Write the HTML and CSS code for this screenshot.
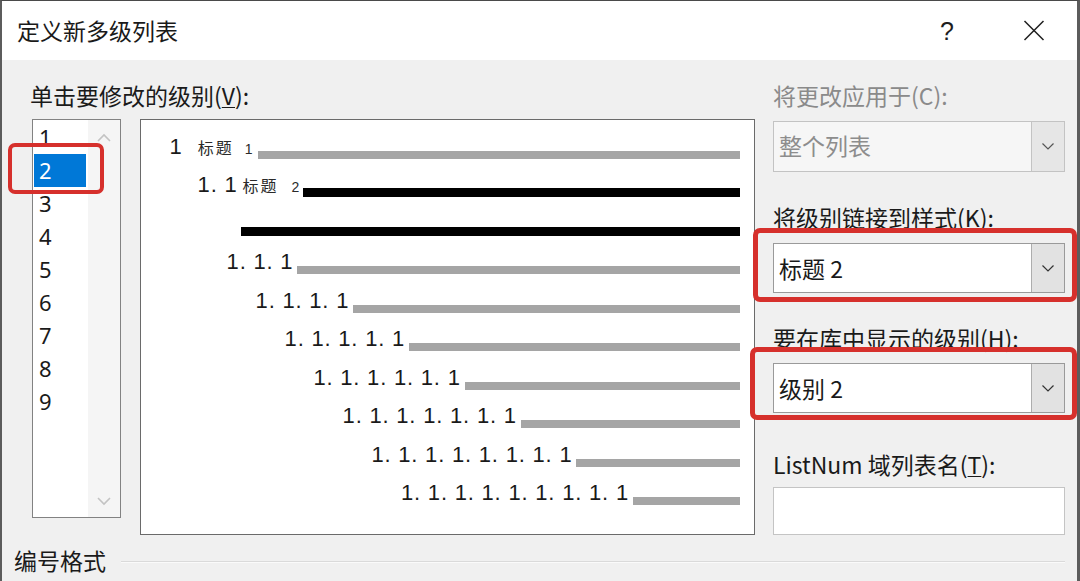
FILE: index.html
```html
<!DOCTYPE html>
<html lang="zh-CN">
<head>
<meta charset="utf-8">
<title>定义新多级列表</title>
<link rel="stylesheet" href="styles.css">
</head>
<body>
<div class="page">
  <div class="dialog">
    <div class="titlebar">
      <span class="title">定义新多级列表</span>
      <div class="title-btns">
        <span class="help">?</span>
        <svg class="close" width="22" height="21" viewBox="0 0 22 21"><path d="M1.5 1L20.5 20M20.5 1L1.5 20" stroke="#1e1e1e" stroke-width="1.5" fill="none"/></svg>
      </div>
    </div>
    <div class="content">
      <div class="main">
        <div class="left">
          <div class="label">单击要修改的级别(<u>V</u>):</div>
          <div class="left-row">
            <div class="levels">
              <div class="items">
                <div class="item">1</div>
                <div class="item sel">2</div>
                <div class="item">3</div>
                <div class="item">4</div>
                <div class="item">5</div>
                <div class="item">6</div>
                <div class="item">7</div>
                <div class="item">8</div>
                <div class="item">9</div>
              </div>
              <div class="scroll">
                <svg width="14" height="9" viewBox="0 0 14 9"><path d="M1 8L7 2L13 8" stroke="#c3c3c3" stroke-width="1.6" fill="none"/></svg>
                <svg width="14" height="9" viewBox="0 0 14 9"><path d="M1 1L7 7L13 1" stroke="#c3c3c3" stroke-width="1.6" fill="none"/></svg>
              </div>
            </div>
            <div class="preview">
              <div class="prow l1">
                <div class="txt"><span class="num">1</span><span class="sty sty1">标题</span><span class="sn sn1">1</span></div>
                <span class="bar gray bar1"></span>
              </div>
              <div class="prow l2">
                <div class="txt"><span class="num">1. 1</span><span class="sty sty2">标题</span><span class="sn sn2">2</span></div>
                <span class="bar black bar2"></span>
              </div>
              <div class="prow lx">
                <span class="bar black"></span>
              </div>
              <div class="prow l3"><div class="txt"><span class="num">1. 1. 1</span></div><span class="bar gray"></span></div>
              <div class="prow l4"><div class="txt"><span class="num">1. 1. 1. 1</span></div><span class="bar gray"></span></div>
              <div class="prow l5"><div class="txt"><span class="num">1. 1. 1. 1. 1</span></div><span class="bar gray"></span></div>
              <div class="prow l6"><div class="txt"><span class="num">1. 1. 1. 1. 1. 1</span></div><span class="bar gray"></span></div>
              <div class="prow l7"><div class="txt"><span class="num">1. 1. 1. 1. 1. 1. 1</span></div><span class="bar gray"></span></div>
              <div class="prow l8"><div class="txt"><span class="num">1. 1. 1. 1. 1. 1. 1. 1</span></div><span class="bar gray"></span></div>
              <div class="prow l9"><div class="txt"><span class="num">1. 1. 1. 1. 1. 1. 1. 1. 1</span></div><span class="bar gray"></span></div>
            </div>
          </div>
        </div>
        <div class="right">
          <div class="label disabled">将更改应用于(C):</div>
          <div class="combo combo-disabled c1">
            <span class="combo-text">整个列表</span>
            <span class="combo-btn"><svg width="12" height="7" viewBox="0 0 12 7"><path d="M0.5 0.5L6 6L11.5 0.5" stroke="#555" stroke-width="1.2" fill="none"/></svg></span>
          </div>
          <div class="label l-k">将级别链接到样式(K):</div>
          <div class="combo c2">
            <span class="combo-text">标题 2</span>
            <span class="combo-btn"><svg width="12" height="7" viewBox="0 0 12 7"><path d="M0.5 0.5L6 6L11.5 0.5" stroke="#333" stroke-width="1.2" fill="none"/></svg></span>
          </div>
          <div class="label l-h">要在库中显示的级别(H):</div>
          <div class="combo c3">
            <span class="combo-text">级别 2</span>
            <span class="combo-btn"><svg width="12" height="7" viewBox="0 0 12 7"><path d="M0.5 0.5L6 6L11.5 0.5" stroke="#333" stroke-width="1.2" fill="none"/></svg></span>
          </div>
          <div class="label l-t">ListNum 域列表名(<u>T</u>):</div>
          <div class="field"></div>
        </div>
      </div>
      <div class="group-head">
        <span class="group-title">编号格式</span>
        <div class="sep"></div>
      </div>
    </div>
  </div>
  <div class="mark mark-level"></div>
  <div class="mark mark-style"></div>
  <div class="mark mark-gallery"></div>
</div>
</body>
</html>
```
FILE: styles.css
```css
html, body {
  margin: 0;
  padding: 0;
  width: 1080px;
  height: 581px;
  overflow: hidden;
  background: #f0f0f0;
}

.page {
  position: relative;
  width: 1080px;
  height: 581px;
  font-family: "Noto Sans CJK SC", "Noto Sans", sans-serif;
  color: #1a1a1a;
}

.dialog {
  box-sizing: border-box;
  width: 1080px;
  height: 581px;
  border-top: 1px solid #4a4a4a;
  border-left: 2px solid #5c5c5c;
  border-right: 3px solid #5c5c5c;
  background: #f0f0f0;
  display: flex;
  flex-direction: column;
}

.titlebar {
  height: 59px;
  background: #ffffff;
  display: flex;
  align-items: center;
  padding-left: 15px;
  padding-right: 32px;
}

.title {
  font-size: 23px;
  line-height: 59px;
  color: #1a1a1a;
}

.title-btns {
  margin-left: auto;
  display: flex;
  align-items: center;
}

.help {
  font-family: "Liberation Sans", sans-serif;
  font-size: 25px;
  line-height: 30px;
  color: #1e1e1e;
  margin-right: 69px;
}

.close {
  display: block;
}

.content {
  flex: 1;
  padding-top: 20px;
  display: flex;
  flex-direction: column;
}

.main {
  display: flex;
}

.left {
  margin-left: 28px;
  width: 725px;
}

.label {
  font-size: 23px;
  line-height: 30px;
  height: 30px;
  white-space: nowrap;
  color: #1a1a1a;
}

.label u {
  text-decoration-thickness: 1px;
  text-underline-offset: 2px;
}

.label.disabled {
  color: #8a8a8a;
}

.left-row {
  margin-top: 9px;
  display: flex;
  align-items: flex-start;
}

.levels {
  box-sizing: border-box;
  margin-left: 2px;
  width: 89px;
  height: 399px;
  border: 1px solid #828282;
  background: #ffffff;
  display: flex;
}

.items {
  flex: 1;
  padding-top: 1px;
}

.item {
  height: 33px;
  line-height: 33px;
  margin-left: 1px;
  margin-right: 2px;
  padding-left: 5px;
  font-family: "Noto Sans", sans-serif;
  font-size: 22px;
  color: #1a1a1a;
}

.item.sel {
  background: #0078d7;
  color: #ffffff;
}

.scroll {
  width: 32px;
  background: #f5f5f5;
  display: flex;
  flex-direction: column;
  justify-content: space-between;
  align-items: center;
  padding: 13px 0 11px;
}

.scroll svg {
  display: block;
}

.preview {
  box-sizing: border-box;
  margin-left: 19px;
  width: 615px;
  height: 416px;
  border: 1px solid #6a6a6a;
  background: #ffffff;
  display: flex;
  flex-direction: column;
}

.prow {
  height: 38.5px;
  display: flex;
  align-items: flex-end;
  padding-right: 14px;
  flex-shrink: 0;
}

.txt {
  display: flex;
  align-items: baseline;
}

.num {
  font-family: "Liberation Sans", sans-serif;
  font-size: 22px;
  line-height: 24px;
  letter-spacing: 0.8px;
  white-space: pre;
  color: #1a1a1a;
}

.sty {
  font-size: 16px;
  line-height: 16px;
  letter-spacing: 2px;
  color: #2a2a2a;
}

.sn {
  font-family: "Liberation Sans", sans-serif;
  font-size: 14px;
  line-height: 16px;
  color: #2a2a2a;
}

.sty1 { margin-left: 15px; }
.sn1 { margin-left: 11px; }
.sty2 { margin-left: 5px; }
.sn2 { margin-left: 13px; }

.bar {
  flex: 1;
  margin-left: 4px;
}

.bar.gray {
  height: 8px;
  background: #a5a5a5;
}

.bar.black {
  height: 9px;
  background: #000000;
}

.bar1 { margin-left: 6px; }
.bar2 { margin-left: 4px; }

.l1 { padding-left: 28.6px; }
.l2 { padding-left: 56.6px; }
.lx { padding-left: 96px; }
.l3 { padding-left: 85.6px; }
.l4 { padding-left: 114.6px; }
.l5 { padding-left: 143.6px; }
.l6 { padding-left: 172.4px; }
.l7 { padding-left: 201.6px; }
.l8 { padding-left: 230.4px; }
.l9 { padding-left: 260px; }

.right {
  margin-left: 18px;
  width: 292px;
  display: flex;
  flex-direction: column;
}

.combo {
  box-sizing: border-box;
  display: flex;
  align-items: stretch;
  border: 1px solid #9a9a9a;
  background: #ffffff;
}

.combo-text {
  flex: 1;
  display: flex;
  align-items: center;
  padding-left: 5px;
  font-size: 23px;
  color: #1a1a1a;
}

.combo-btn {
  box-sizing: border-box;
  width: 33px;
  display: flex;
  align-items: center;
  justify-content: center;
  background: #e2e2e2;
  border-left: 1px solid #adadad;
}

.combo-disabled {
  border-color: #c3c3c3;
  background: #f6f6f6;
}

.combo-disabled .combo-text {
  color: #8d8d8d;
}

.combo-disabled .combo-btn {
  background: #e6e6e6;
  border-left-color: #c3c3c3;
}

.c1 {
  margin-top: 11px;
  height: 51px;
}

.c1 .combo-text {
  padding-bottom: 3px;
}

.l-k { margin-top: 30px; }

.c2 {
  margin-top: 11px;
  height: 50px;
}

.l-h { margin-top: 30px; }

.c3 {
  margin-top: 10px;
  height: 50px;
}

.l-t { margin-top: 36px; }

.field {
  box-sizing: border-box;
  margin-top: 8px;
  height: 48px;
  border: 1px solid #c4c4c4;
  background: #ffffff;
}

.group-head {
  margin-top: 10px;
  display: flex;
  align-items: center;
  padding-left: 12px;
  padding-right: 12px;
}

.group-title {
  font-size: 23px;
  line-height: 30px;
  color: #1a1a1a;
}

.sep {
  flex: 1;
  margin-left: 15px;
  height: 1px;
  background: #dadada;
  border-bottom: 1px solid #fafafa;
  margin-top: 4px;
}

.mark {
  position: absolute;
  box-sizing: border-box;
  border: 5px solid #d6302c;
  border-radius: 7px;
}

.mark-level {
  left: 8px;
  top: 143px;
  width: 96px;
  height: 51px;
  border-width: 4px;
}

.mark-style {
  left: 753px;
  top: 228px;
  width: 324px;
  height: 74px;
}

.mark-gallery {
  left: 750px;
  top: 347px;
  width: 327px;
  height: 73px;
}
```
